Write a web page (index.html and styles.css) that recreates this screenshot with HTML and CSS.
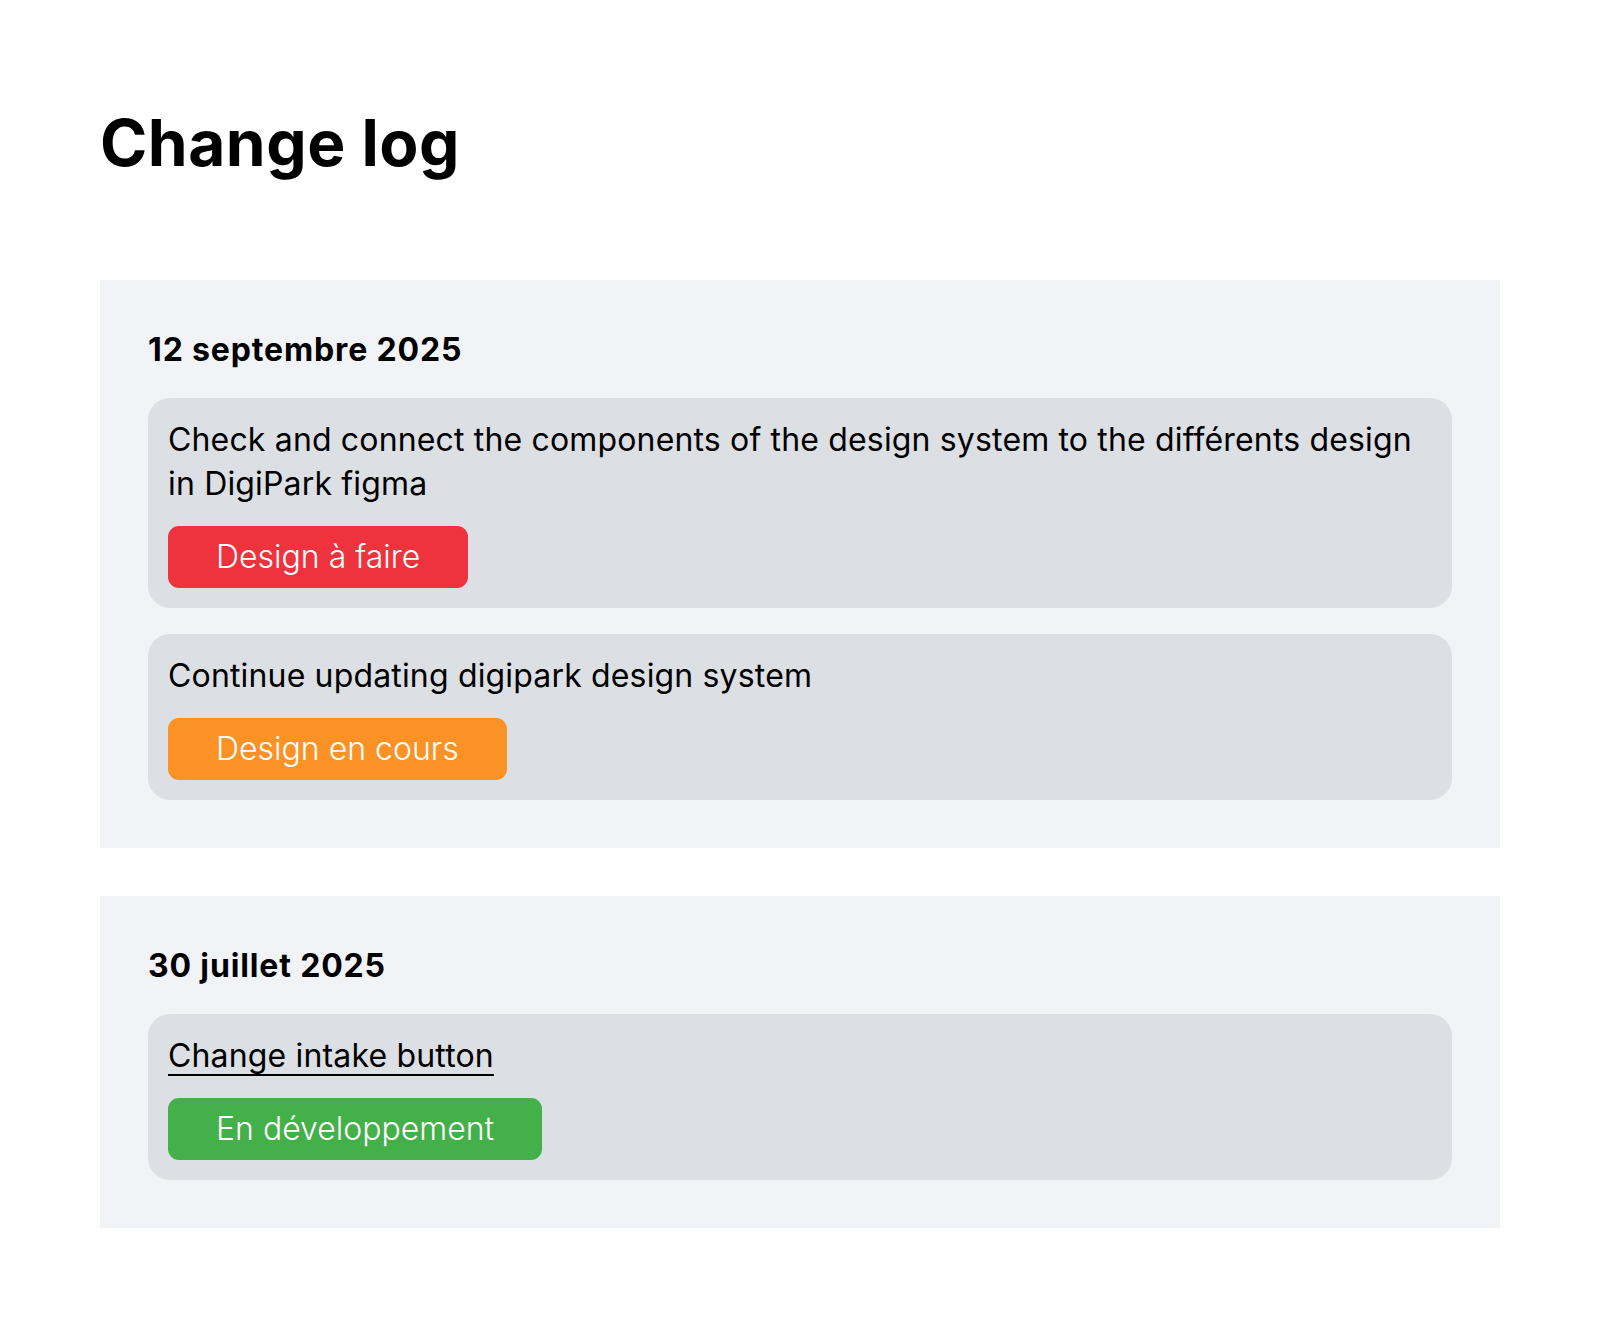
FILE: index.html
```html
<!DOCTYPE html>
<html lang="fr">
<head>
<meta charset="utf-8">
<title>Change log</title>
<link rel="stylesheet" href="styles.css">
</head>
<body>
<main class="page">
  <h1 class="title">Change log</h1>
  <div class="log">
    <section class="day">
      <h2 class="day-date">12 septembre 2025</h2>
      <div class="entries">
        <div class="entry">
          <p class="entry-text">Check and connect the components of the design system to the différents design in DigiPark figma</p>
          <span class="badge badge-red">Design à faire</span>
        </div>
        <div class="entry">
          <p class="entry-text">Continue updating digipark design system</p>
          <span class="badge badge-orange">Design en cours</span>
        </div>
      </div>
    </section>
    <section class="day">
      <h2 class="day-date">30 juillet 2025</h2>
      <div class="entries">
        <div class="entry">
          <p class="entry-text"><a class="entry-link" href="#">Change intake button</a></p>
          <span class="badge badge-green">En développement</span>
        </div>
      </div>
    </section>
  </div>
</main>
</body>
</html>
```
FILE: styles.css
```css
* { box-sizing: border-box; }
html, body { margin: 0; padding: 0; background: #ffffff; }
body {
  font-family: Inter, "Noto Sans", "Liberation Sans", sans-serif;
  color: #000;
}
.page {
  padding: 105px 100px 100px;
}
.title {
  margin: 0 0 98px;
  font-size: 64px;
  line-height: 1.2;
  font-weight: 700;
  letter-spacing: 0.5px;
}
.log {
  display: flex;
  flex-direction: column;
  gap: 48px;
}
.day {
  background: #f2f3f7;
  padding: 48px;
}
.day-date {
  margin: 0 0 26px;
  font-size: 32px;
  line-height: 44px;
  font-weight: 700;
  letter-spacing: 0.85px;
}
.entries {
  display: flex;
  flex-direction: column;
  gap: 26px;
}
.entry {
  background: #dcdfe4;
  border-radius: 22px;
  padding: 20px;
  display: flex;
  flex-direction: column;
  align-items: flex-start;
  gap: 20px;
}
.entry-text {
  margin: 0;
  font-size: 32px;
  line-height: 44px;
  font-weight: 400;
  letter-spacing: 0.16px;
}
.entry-link {
  color: #000;
  text-decoration: underline;
  text-decoration-thickness: 2px;
  text-underline-offset: 7px;
}
.badge {
  display: inline-flex;
  align-items: center;
  justify-content: center;
  height: 62px;
  padding: 0 48px;
  border-radius: 11px;
  color: #fff;
  font-size: 32px;
  line-height: 44px;
  font-weight: 300;
}
.badge-red { background: #ee323e; }
.badge-orange { background: #fa9226; }
.badge-green { background: #43b04a; }
```
